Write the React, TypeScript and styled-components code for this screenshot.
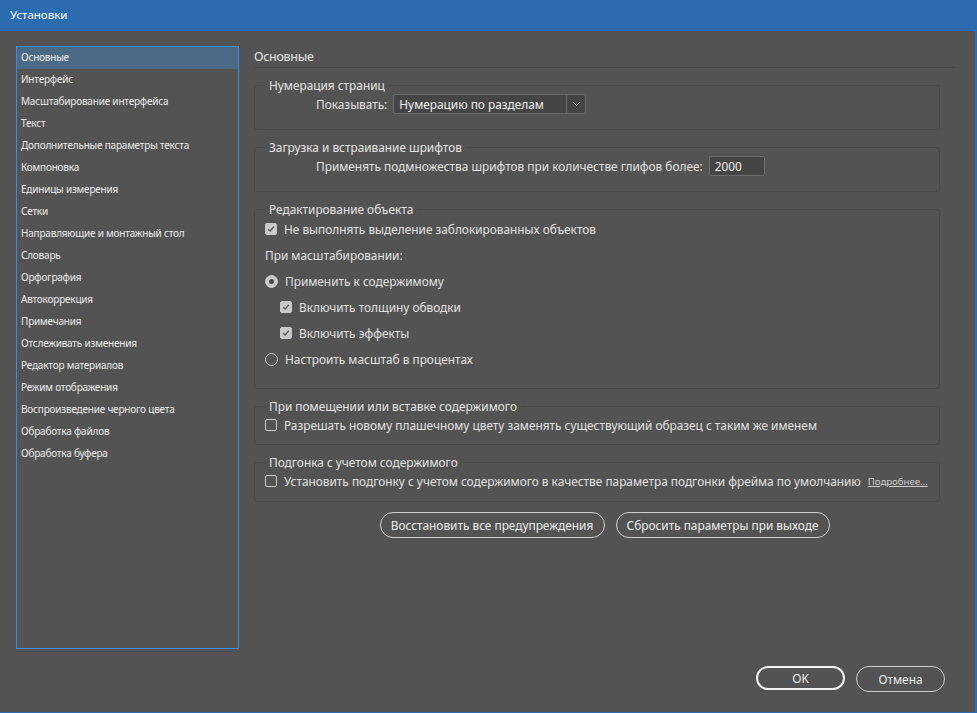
import React from 'react'
import styled, { createGlobalStyle } from 'styled-components'

const GlobalStyle = createGlobalStyle`
  html, body { margin: 0; padding: 0; background: #535353; }
  body { font-family: "Noto Sans", "DejaVu Sans", sans-serif; }
  * { box-sizing: border-box; }
`

const sections = [
  'Основные',
  'Интерфейс',
  'Масштабирование интерфейса',
  'Текст',
  'Дополнительные параметры текста',
  'Компоновка',
  'Единицы измерения',
  'Сетки',
  'Направляющие и монтажный стол',
  'Словарь',
  'Орфография',
  'Автокоррекция',
  'Примечания',
  'Отслеживать изменения',
  'Редактор материалов',
  'Режим отображения',
  'Воспроизведение черного цвета',
  'Обработка файлов',
  'Обработка буфера',
]

const Window = styled.div`
  width: 977px;
  height: 713px;
  display: flex;
  flex-direction: column;
  background: #535353;
  border-right: 2px solid #2b6cb0;
  border-bottom: 1px solid #2b6cb0;
  color: #e2e2e2;
  font-size: 11.85px;
`

const TitleBar = styled.div`
  height: 31px;
  flex: none;
  background: #2b6cb0;
  color: #fff;
  font-size: 11.5px;
  display: flex;
  align-items: center;
  padding-left: 10px;
  padding-bottom: 2px;
`

const Body = styled.div`
  flex: 1;
  display: flex;
  flex-direction: column;
  padding: 15px 0 0 16px;
`

const Columns = styled.div`
  display: flex;
  gap: 15px;
`

const Sidebar = styled.ul`
  list-style: none;
  margin: 0;
  padding: 0;
  width: 223px;
  height: 603px;
  border: 1px solid #3a8ee6;
`

const SideItem = styled.li<{ $active?: boolean }>`
  height: 22px;
  line-height: 21px;
  padding-left: 4px;
  font-size: 10px;
  letter-spacing: -0.2px;
  color: #ececec;
  background: ${p => (p.$active ? '#4b6a86' : 'transparent')};
  white-space: nowrap;
`

const Main = styled.div`
  width: 701px;
  display: flex;
  flex-direction: column;
`

const Header = styled.div`
  height: 22px;
  line-height: 21px;
  font-size: 12.5px;
  letter-spacing: -0.3px;
  color: #e6e6e6;
  border-bottom: 1px solid #484848;
  margin-bottom: 10px;
`

const Group = styled.fieldset<{ $pt?: number; $pb: number }>`
  width: 686px;
  margin: 0 0 10px 0;
  padding: ${p => p.$pt ?? 0}px 10px ${p => p.$pb}px 10px;
  border: 1px solid #4a4a4a;
  border-radius: 3px;
  min-width: 0;
`

const Legend = styled.legend`
  margin-left: 0;
  padding: 0 4px;
  font-size: 11.85px;
  line-height: 14px;
  color: #e4e4e4;
`

const FormRow = styled.div`
  display: flex;
  align-items: center;
  gap: 6px;
  padding-left: 51px;
  height: 20px;
`

const Field = styled.div<{ $w: number }>`
  width: ${p => p.$w}px;
  height: 20px;
  display: flex;
  align-items: center;
  background: #454545;
  border: 1px solid #6c6c6c;
  border-radius: 2px;
  color: #f0f0f0;
  padding-left: 5px;
`

const FieldText = styled.span`
  flex: 1;
`

const DropButton = styled.span`
  width: 19px;
  height: 100%;
  display: flex;
  align-items: center;
  justify-content: center;
  border-left: 1px solid #6c6c6c;
`

const OptionRow = styled.div<{ $indent?: number; $h?: number }>`
  height: ${p => p.$h ?? 26}px;
  display: flex;
  align-items: center;
  gap: 7px;
  padding-left: ${p => p.$indent ?? 0}px;
  white-space: nowrap;
`

const Box = styled.span<{ $checked?: boolean }>`
  width: 12px;
  height: 12px;
  flex: none;
  border-radius: 2px;
  border: 1px solid #c9c9c9;
  background: ${p => (p.$checked ? '#c9c9c9' : 'transparent')};
  display: flex;
  align-items: center;
  justify-content: center;
`

const Radio = styled.span<{ $checked?: boolean }>`
  width: 13px;
  height: 13px;
  flex: none;
  border-radius: 50%;
  border: 1px solid #c9c9c9;
  background: ${p => (p.$checked ? '#c9c9c9' : 'transparent')};
  display: flex;
  align-items: center;
  justify-content: center;
  &::after {
    content: '';
    width: 5px;
    height: 5px;
    border-radius: 50%;
    background: ${p => (p.$checked ? '#4a4a4a' : 'transparent')};
  }
`

const MoreLink = styled.span`
  font-size: 9.6px;
  color: #cfcfcf;
  text-decoration: underline;
`

const ActionRow = styled.div`
  display: flex;
  justify-content: center;
  gap: 11px;
`

const PillButton = styled.button<{ $w: number; $primary?: boolean }>`
  width: ${p => p.$w}px;
  height: ${p => (p.$primary ? 24 : 26)}px;
  border-radius: 13px;
  border: ${p => (p.$primary ? '2px solid #f2f2f2' : '1px solid #cfcfcf')};
  background: transparent;
  color: #ededed;
  font-family: inherit;
  font-size: 11.85px;
  padding: 0;
  display: flex;
  align-items: center;
  justify-content: center;
`

const Footer = styled.div`
  margin-top: auto;
  display: flex;
  justify-content: flex-end;
  gap: 11px;
  padding: 0 30px 20px 0;
`

const Check = () => (
  <svg width="8" height="8" viewBox="0 0 8 8">
    <path d="M1.2 4.2 L3.1 6 L6.8 1.8" fill="none" stroke="#5a5a5a" strokeWidth="1.3" />
  </svg>
)

const Chevron = () => (
  <svg width="9" height="6" viewBox="0 0 9 6">
    <path d="M1 1 L4.5 4.5 L8 1" fill="none" stroke="#d8d8d8" strokeWidth="1" />
  </svg>
)

export default function App() {
  return (
    <>
      <GlobalStyle />
      <Window>
        <TitleBar>Установки</TitleBar>
        <Body>
          <Columns>
            <Sidebar>
              {sections.map((s, i) => (
                <SideItem key={s} $active={i === 0}>
                  {s}
                </SideItem>
              ))}
            </Sidebar>
            <Main>
              <Header>Основные</Header>

              <Group $pt={2} $pb={15}>
                <Legend>Нумерация страниц</Legend>
                <FormRow>
                  <span>Показывать:</span>
                  <Field $w={193}>
                    <FieldText>Нумерацию по разделам</FieldText>
                    <DropButton>
                      <Chevron />
                    </DropButton>
                  </Field>
                </FormRow>
              </Group>

              <Group $pt={2} $pb={15}>
                <Legend>Загрузка и встраивание шрифтов</Legend>
                <FormRow>
                  <span>Применять подмножества шрифтов при количестве глифов более:</span>
                  <Field $w={56}>
                    <FieldText>2000</FieldText>
                  </Field>
                </FormRow>
              </Group>

              <Group $pb={16}>
                <Legend>Редактирование объекта</Legend>
                <OptionRow>
                  <Box $checked>
                    <Check />
                  </Box>
                  Не выполнять выделение заблокированных объектов
                </OptionRow>
                <OptionRow>При масштабировании:</OptionRow>
                <OptionRow>
                  <Radio $checked />
                  Применить к содержимому
                </OptionRow>
                <OptionRow $indent={15}>
                  <Box $checked>
                    <Check />
                  </Box>
                  Включить толщину обводки
                </OptionRow>
                <OptionRow $indent={15}>
                  <Box $checked>
                    <Check />
                  </Box>
                  Включить эффекты
                </OptionRow>
                <OptionRow>
                  <Radio />
                  Настроить масштаб в процентах
                </OptionRow>
              </Group>

              <Group $pb={7}>
                <Legend>При помещении или вставке содержимого</Legend>
                <OptionRow $h={24}>
                  <Box />
                  Разрешать новому плашечному цвету заменять существующий образец с таким же именем
                </OptionRow>
              </Group>

              <Group $pb={8}>
                <Legend>Подгонка с учетом содержимого</Legend>
                <OptionRow $h={24}>
                  <Box />
                  Установить подгонку с учетом содержимого в качестве параметра подгонки фрейма по умолчанию
                  <MoreLink>Подробнее...</MoreLink>
                </OptionRow>
              </Group>

              <ActionRow>
                <PillButton $w={225}>Восстановить все предупреждения</PillButton>
                <PillButton $w={214}>Сбросить параметры при выходе</PillButton>
              </ActionRow>
            </Main>
          </Columns>
          <Footer>
            <PillButton $w={89} $primary>
              OK
            </PillButton>
            <PillButton $w={89}>Отмена</PillButton>
          </Footer>
        </Body>
      </Window>
    </>
  )
}
